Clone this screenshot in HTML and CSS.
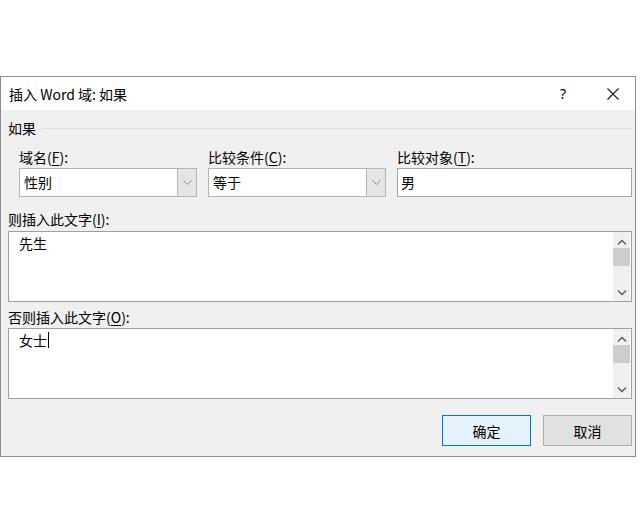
FILE: index.html
```html
<!DOCTYPE html>
<html lang="zh-CN">
<head>
  <meta charset="UTF-8" />
  <title>插入 Word 域: 如果</title>
  <link rel="stylesheet" href="styles.css">
</head>
<body>

  <div class="dialog">
    <div class="titlebar">
      <span class="title">插入 Word 域: 如果</span>
      <span class="help">?</span>
      <span class="close">
        <svg width="12" height="12" viewBox="0 0 12 12"><path d="M0.5 0.5 L11.5 11.5 M11.5 0.5 L0.5 11.5" stroke="#1a1a1a" stroke-width="1.1" fill="none"/></svg>
      </span>
    </div>

    <div class="content">
      <div class="group">
        <span>如果</span>
        <div class="rule"></div>
      </div>

      <div class="fields">
        <div class="field">
          <label>域名(<u>F</u>):</label>
          <div class="combo">
            <span class="value">性别</span>
            <span class="drop"><svg width="9" height="5" viewBox="0 0 9 5"><path d="M0.5 0.5 L4.5 4.5 L8.5 0.5" stroke="#888" fill="none"/></svg></span>
          </div>
        </div>
        <div class="field">
          <label>比较条件(<u>C</u>):</label>
          <div class="combo">
            <span class="value">等于</span>
            <span class="drop"><svg width="9" height="5" viewBox="0 0 9 5"><path d="M0.5 0.5 L4.5 4.5 L8.5 0.5" stroke="#888" fill="none"/></svg></span>
          </div>
        </div>
        <div class="field">
          <label>比较对象(<u>T</u>):</label>
          <div class="textbox">男</div>
        </div>
      </div>

      <label class="area-label first">则插入此文字(<u>I</u>):</label>
      <div class="area">
        <div class="area-text">先生</div>
        <div class="scrollbar">
          <svg width="10" height="6" viewBox="0 0 10 6"><path d="M1 5.5 L5 1.5 L9 5.5" stroke="#555" stroke-width="1.3" fill="none"/></svg>
          <div class="thumb"></div>
          <div class="track"></div>
          <svg width="10" height="6" viewBox="0 0 10 6"><path d="M1 0.5 L5 4.5 L9 0.5" stroke="#555" stroke-width="1.3" fill="none"/></svg>
        </div>
      </div>

      <label class="area-label">否则插入此文字(<u>O</u>):</label>
      <div class="area">
        <div class="area-text">女士<span class="caret"></span></div>
        <div class="scrollbar">
          <svg width="10" height="6" viewBox="0 0 10 6"><path d="M1 5.5 L5 1.5 L9 5.5" stroke="#555" stroke-width="1.3" fill="none"/></svg>
          <div class="thumb"></div>
          <div class="track"></div>
          <svg width="10" height="6" viewBox="0 0 10 6"><path d="M1 0.5 L5 4.5 L9 0.5" stroke="#555" stroke-width="1.3" fill="none"/></svg>
        </div>
      </div>

      <div class="actions">
        <button class="btn primary">确定</button>
        <button class="btn">取消</button>
      </div>
    </div>
  </div>

</body>
</html>
```

FILE: styles.css
```css
html, body {
  margin: 0;
  padding: 0;
}
*, *::before, *::after {
  box-sizing: border-box;
}
body {
  background: #fff;
  font-family: "Noto Sans CJK SC", "Noto Sans", sans-serif;
  font-size: 14px;
  color: #000;
}

.dialog {
  width: 636px;
  height: 381px;
  margin-top: 76px;
  border: 1px solid #8c8c8c;
  background: #f0f0f0;
}

.titlebar {
  height: 33px;
  background: #fff;
  display: flex;
  align-items: center;
  padding-left: 8px;
}

.title {
  font-size: 14px;
  line-height: 20px;
}

.help {
  margin-left: auto;
  width: 30px;
  text-align: center;
  font-family: "Noto Sans", sans-serif;
  font-size: 14px;
  line-height: 20px;
}

.close {
  width: 44px;
  margin-left: 13px;
  display: flex;
  justify-content: center;
}

.content {
  padding: 0 3px 0 7px;
}

.group {
  height: 36px;
  display: flex;
  align-items: center;
  gap: 6px;
  line-height: 20px;
}

.rule {
  flex: 1;
  height: 1px;
  background: #dcdcdc;
}

.fields {
  display: grid;
  grid-template-columns: 178px 178px 1fr;
  column-gap: 11px;
  padding-left: 11px;
}

.field label {
  display: block;
  height: 22px;
  line-height: 22px;
}

u {
  text-decoration-thickness: 1px;
  text-underline-offset: 2px;
}

.combo {
  height: 29px;
  background: #fff;
  border: 1px solid #b4b4b4;
  display: flex;
}

.combo .value {
  flex: 1;
  padding-left: 4px;
  line-height: 27px;
}

.combo .drop {
  width: 19px;
  background: #e5e5e5;
  border-left: 1px solid #b4b4b4;
  display: flex;
  align-items: center;
  justify-content: center;
}

.textbox {
  height: 29px;
  background: #fff;
  border: 1px solid #a5a5a5;
  padding-left: 3px;
  line-height: 27px;
}

.area-label {
  display: block;
  padding-top: 5px;
  line-height: 20px;
  margin-bottom: 1px;
}

.area-label.first {
  padding-top: 12px;
  margin-bottom: 2px;
}

.area {
  height: 71px;
  background: #fff;
  border: 1px solid #a0a0a0;
  display: flex;
}

.area-text {
  flex: 1;
  padding: 0 0 0 10px;
  line-height: 22px;
  display: flex;
  align-items: flex-start;
}

.caret {
  display: inline-block;
  width: 1px;
  height: 16px;
  margin-top: 3px;
  margin-left: 1px;
  background: #000;
}

.scrollbar {
  width: 17px;
  margin-right: 1px;
  background: #f0f0f0;
  display: flex;
  flex-direction: column;
  align-items: center;
  padding: 7px 0 5px;
}

.scrollbar .thumb {
  width: 17px;
  height: 18px;
  margin-top: 3px;
  background: #cdcdcd;
}

.scrollbar .track {
  flex: 1;
}

.actions {
  display: flex;
  justify-content: flex-end;
  gap: 12px;
  margin-top: 16px;
}

.btn {
  width: 89px;
  height: 31px;
  font-family: inherit;
  font-size: 14px;
  color: #000;
  background: #e1e1e1;
  border: 1px solid #adadad;
  padding: 0;
}

.btn.primary {
  background: #e5f1fb;
  border-color: #0078d7;
}
```
